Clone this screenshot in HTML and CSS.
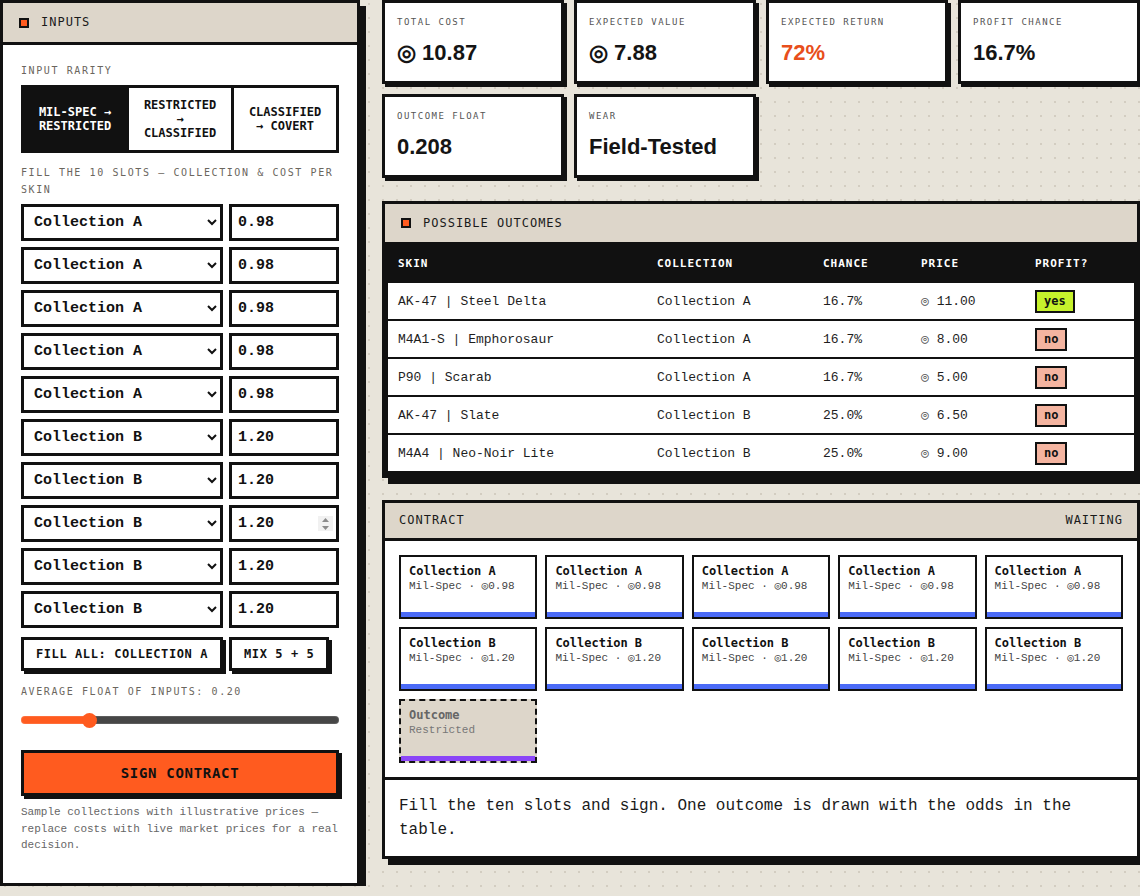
FILE: index.html
```html
<!DOCTYPE html>
<html lang="en">
<head>
<meta charset="utf-8">
<title>Trade-up Contract</title>
<link rel="stylesheet" href="styles.css">
</head>
<body>
<div class="page">
  <aside class="panel inputs">
    <div class="panel-head"><span class="sq"></span><span>INPUTS</span></div>
    <div class="inputs-body">
      <div class="label">INPUT RARITY</div>
      <div class="rarity">
        <button class="seg active">MIL-SPEC → RESTRICTED</button>
        <button class="seg">RESTRICTED → CLASSIFIED</button>
        <button class="seg">CLASSIFIED → COVERT</button>
      </div>
      <div class="label fill-label">FILL THE 10 SLOTS — COLLECTION &amp; COST PER SKIN</div>
      <div class="slots">
        <div class="slot"><select><option selected>Collection A</option><option>Collection B</option></select><div class="num"><input type="text" value="0.98"></div></div>
        <div class="slot"><select><option selected>Collection A</option><option>Collection B</option></select><div class="num"><input type="text" value="0.98"></div></div>
        <div class="slot"><select><option selected>Collection A</option><option>Collection B</option></select><div class="num"><input type="text" value="0.98"></div></div>
        <div class="slot"><select><option selected>Collection A</option><option>Collection B</option></select><div class="num"><input type="text" value="0.98"></div></div>
        <div class="slot"><select><option selected>Collection A</option><option>Collection B</option></select><div class="num"><input type="text" value="0.98"></div></div>
        <div class="slot"><select><option>Collection A</option><option selected>Collection B</option></select><div class="num"><input type="text" value="1.20"></div></div>
        <div class="slot"><select><option>Collection A</option><option selected>Collection B</option></select><div class="num"><input type="text" value="1.20"></div></div>
        <div class="slot"><select><option>Collection A</option><option selected>Collection B</option></select><div class="num"><input type="text" value="1.20"><span class="spin"><svg width="9" height="14" viewBox="0 0 9 14"><path d="M4.5 1 L8 5 H1 Z M4.5 13 L8 9 H1 Z" fill="#8a8a8a"/></svg></span></div></div>
        <div class="slot"><select><option>Collection A</option><option selected>Collection B</option></select><div class="num"><input type="text" value="1.20"></div></div>
        <div class="slot"><select><option>Collection A</option><option selected>Collection B</option></select><div class="num"><input type="text" value="1.20"></div></div>
      </div>
      <div class="actions">
        <button class="btn btn-wide">FILL ALL: COLLECTION A</button>
        <button class="btn">MIX 5 + 5</button>
      </div>
      <div class="label float-label">AVERAGE FLOAT OF INPUTS: 0.20</div>
      <input class="range" type="range" min="0" max="1" step="0.01" value="0.2">
      <button class="sign">SIGN CONTRACT</button>
      <p class="note">Sample collections with illustrative prices — replace costs with live market prices for a real decision.</p>
    </div>
  </aside>

  <main class="right">
    <div class="stats">
      <div class="stat"><div class="stat-label">TOTAL COST</div><div class="stat-value">◎ 10.87</div></div>
      <div class="stat"><div class="stat-label">EXPECTED VALUE</div><div class="stat-value">◎ 7.88</div></div>
      <div class="stat"><div class="stat-label">EXPECTED RETURN</div><div class="stat-value neg">72%</div></div>
      <div class="stat"><div class="stat-label">PROFIT CHANCE</div><div class="stat-value">16.7%</div></div>
      <div class="stat"><div class="stat-label">OUTCOME FLOAT</div><div class="stat-value">0.208</div></div>
      <div class="stat"><div class="stat-label">WEAR</div><div class="stat-value">Field-Tested</div></div>
    </div>

    <section class="panel outcomes">
      <div class="panel-head outcomes-head"><span class="sq"></span><span>POSSIBLE OUTCOMES</span></div>
      <div class="table-wrap">
        <table>
          <colgroup><col class="c1"><col class="c2"><col class="c3"><col class="c4"><col></colgroup>
          <thead><tr><th>SKIN</th><th>COLLECTION</th><th>CHANCE</th><th>PRICE</th><th>PROFIT?</th></tr></thead>
          <tbody>
            <tr><td>AK-47 | Steel Delta</td><td>Collection A</td><td>16.7%</td><td><span class="coin">◎</span> 11.00</td><td><span class="badge yes">yes</span></td></tr>
            <tr><td>M4A1-S | Emphorosaur</td><td>Collection A</td><td>16.7%</td><td><span class="coin">◎</span> 8.00</td><td><span class="badge no">no</span></td></tr>
            <tr><td>P90 | Scarab</td><td>Collection A</td><td>16.7%</td><td><span class="coin">◎</span> 5.00</td><td><span class="badge no">no</span></td></tr>
            <tr><td>AK-47 | Slate</td><td>Collection B</td><td>25.0%</td><td><span class="coin">◎</span> 6.50</td><td><span class="badge no">no</span></td></tr>
            <tr><td>M4A4 | Neo-Noir Lite</td><td>Collection B</td><td>25.0%</td><td><span class="coin">◎</span> 9.00</td><td><span class="badge no">no</span></td></tr>
          </tbody>
        </table>
      </div>
    </section>

    <section class="panel contract">
      <div class="panel-head contract-head"><span>CONTRACT</span><span>WAITING</span></div>
      <div class="tiles">
        <div class="tile"><div class="tile-title">Collection A</div><div class="tile-meta">Mil-Spec · ◎0.98</div></div>
        <div class="tile"><div class="tile-title">Collection A</div><div class="tile-meta">Mil-Spec · ◎0.98</div></div>
        <div class="tile"><div class="tile-title">Collection A</div><div class="tile-meta">Mil-Spec · ◎0.98</div></div>
        <div class="tile"><div class="tile-title">Collection A</div><div class="tile-meta">Mil-Spec · ◎0.98</div></div>
        <div class="tile"><div class="tile-title">Collection A</div><div class="tile-meta">Mil-Spec · ◎0.98</div></div>
        <div class="tile"><div class="tile-title">Collection B</div><div class="tile-meta">Mil-Spec · ◎1.20</div></div>
        <div class="tile"><div class="tile-title">Collection B</div><div class="tile-meta">Mil-Spec · ◎1.20</div></div>
        <div class="tile"><div class="tile-title">Collection B</div><div class="tile-meta">Mil-Spec · ◎1.20</div></div>
        <div class="tile"><div class="tile-title">Collection B</div><div class="tile-meta">Mil-Spec · ◎1.20</div></div>
        <div class="tile"><div class="tile-title">Collection B</div><div class="tile-meta">Mil-Spec · ◎1.20</div></div>
        <div class="tile outcome"><div class="tile-title">Outcome</div><div class="tile-meta">Restricted</div></div>
      </div>
      <div class="contract-msg">Fill the ten slots and sign. One outcome is drawn with the odds in the table.</div>
    </section>
  </main>
</div>
</body>
</html>
```

FILE: styles.css
```css
html, body {
  margin: 0;
  padding: 0;
  overflow: hidden;
}
body {
  background-color: #e8e4da;
  background-image: radial-gradient(circle, #d3cdc1 1px, transparent 1.3px);
  background-size: 14px 14px;
  background-position: -2px -3px;
  color: #111;
  font-family: "DejaVu Sans Mono", monospace;
}
.page {
  display: grid;
  grid-template-columns: 360px 758px;
  column-gap: 22px;
  align-items: start;
}

/* panels */
.panel {
  background: #fff;
  border: 3px solid #111;
  box-shadow: 6px 6px 0 #111;
}
.panel-head {
  display: flex;
  align-items: center;
  gap: 12px;
  height: 35px;
  padding: 0 16px;
  background: #ddd6ca;
  border-bottom: 3px solid #111;
  font: 12px/15px "DejaVu Sans Mono", monospace;
  letter-spacing: 1px;
  color: #1a1a1a;
}
.inputs .panel-head { height: 39px; }
.outcomes .outcomes-head { height: 38px; border-bottom: 0; }
.sq {
  width: 10px;
  height: 10px;
  box-sizing: border-box;
  background: #ff5b1f;
  border: 2px solid #111;
  flex: none;
}

/* inputs panel */
.inputs { box-sizing: border-box; }
.inputs-body { padding: 17px 18px 30px; }
.label {
  font: 10px/17px "DejaVu Sans Mono", monospace;
  letter-spacing: 1.6px;
  color: #6b665e;
}
.label + .rarity { margin-top: 6px; }
.rarity {
  display: grid;
  grid-template-columns: repeat(3, 1fr);
  gap: 3px;
  height: 68px;
  box-sizing: border-box;
  border: 3px solid #111;
  background: #111;
}
.seg {
  margin: 0;
  border: 0;
  border-radius: 0;
  padding: 0 10px;
  background: #fff;
  color: #111;
  font: bold 12px/14px "DejaVu Sans Mono", monospace;
  text-align: center;
}
.seg.active { background: #111; color: #fff; }
.fill-label { margin-top: 11px; }
.slots {
  margin-top: 6px;
  display: flex;
  flex-direction: column;
  gap: 6px;
}
.slot {
  display: grid;
  grid-template-columns: 1fr 110px;
  gap: 6px;
}
.slot select {
  height: 37px;
  box-sizing: border-box;
  margin: 0;
  border: 3px solid #111;
  border-radius: 0;
  background: #fff;
  color: #111;
  padding: 0 4px 0 6px;
  font: bold 15px "Liberation Mono", monospace;
}
.num { position: relative; }
.num input {
  width: 100%;
  height: 37px;
  box-sizing: border-box;
  margin: 0;
  border: 3px solid #111;
  border-radius: 0;
  background: #fff;
  color: #111;
  padding: 0 6px;
  font: bold 15px "Liberation Mono", monospace;
  outline: none;
}
.spin {
  position: absolute;
  right: 6px;
  top: 11px;
  width: 15px;
  height: 15px;
  background: #f1f1f1;
  display: flex;
  align-items: center;
  justify-content: center;
}
.actions {
  margin-top: 9px;
  display: flex;
  gap: 6px;
}
.btn {
  margin: 0;
  height: 34px;
  box-sizing: border-box;
  padding: 0 12px;
  border: 3px solid #111;
  border-radius: 0;
  background: #fff;
  color: #111;
  box-shadow: 3px 3px 0 #111;
  font: bold 12px/28px "DejaVu Sans Mono", monospace;
  letter-spacing: 0.6px;
  white-space: nowrap;
}
.btn-wide { width: 202px; padding: 0; }
.float-label { margin-top: 12px; }
.range {
  -webkit-appearance: none;
  appearance: none;
  display: block;
  width: 100%;
  height: 16px;
  margin: 12px 0 0;
  padding: 0;
  background: transparent;
}
.range::-webkit-slider-runnable-track {
  height: 8px;
  border-radius: 4px;
  background: linear-gradient(to right, #ff5b1f 0 21.5%, #464646 21.5% 100%);
  box-shadow: inset 0 0 0 1px rgba(255,255,255,0.12);
}
.range::-webkit-slider-thumb {
  -webkit-appearance: none;
  appearance: none;
  width: 15px;
  height: 15px;
  margin-top: -3.5px;
  border: 0;
  border-radius: 50%;
  background: #ff5b1f;
}
.sign {
  display: block;
  width: 100%;
  height: 46px;
  margin: 22px 0 0;
  box-sizing: border-box;
  border: 3px solid #111;
  border-radius: 0;
  background: #ff5b1f;
  color: #111;
  box-shadow: 3px 3px 0 #111;
  font: bold 14px "DejaVu Sans Mono", monospace;
  letter-spacing: 0.7px;
}
.note {
  margin: 8px 0 0;
  font: 11px/16.5px "Liberation Mono", monospace;
  color: #666;
}
.inputs-body { padding-bottom: 29px; }

/* right column */
.right { display: block; }
.stats {
  display: grid;
  grid-template-columns: repeat(4, 1fr);
  gap: 10px;
}
.stat {
  background: #fff;
  border: 3px solid #111;
  box-shadow: 3px 3px 0 #111;
  padding: 13px 12px 15px;
}
.stat-label {
  font: 9px/13px "DejaVu Sans Mono", monospace;
  letter-spacing: 1.5px;
  color: #555;
}
.stat-value {
  margin-top: 10px;
  font: bold 22px/27px "Liberation Sans", Arial, sans-serif;
  color: #141414;
}
.stat-value.neg { color: #e84e1b; }

.outcomes { margin-top: 23px; }
.table-wrap {
  background: #111;
  padding: 0 3px 2px;
}
table {
  width: 100%;
  table-layout: fixed;
  border-collapse: separate;
  border-spacing: 0;
}
col.c1 { width: 259px; }
col.c2 { width: 166px; }
col.c3 { width: 98px; }
col.c4 { width: 114px; }
th {
  background: #111;
  color: #fff;
  text-align: left;
  padding: 15px 10px 13px;
  font: bold 11px/13px "DejaVu Sans Mono", monospace;
  letter-spacing: 1px;
}
td {
  height: 36px;
  padding: 0 10px;
  background: #fff;
  border-bottom: 2px solid #111;
  font: 13px "Liberation Mono", monospace;
  color: #1e1e1e;
  vertical-align: middle;
  white-space: nowrap;
}
.coin { color: #555; }
.badge {
  display: inline-block;
  padding: 0 7px;
  border: 2px solid #111;
  font: bold 12px/19px "DejaVu Sans Mono", monospace;
  color: #111;
}
.badge.yes { background: #c6f22c; }
.badge.no { background: #f4b4a0; }

.contract { margin-top: 22px; }
.contract-head {
  justify-content: space-between;
  padding: 0 14px;
}
.tiles {
  display: grid;
  grid-template-columns: repeat(5, 1fr);
  gap: 8px;
  padding: 14px;
  border-bottom: 3px solid #111;
}
.tile {
  height: 64px;
  box-sizing: border-box;
  border: 2px solid #111;
  padding: 6px 8px 0;
  background: #fff;
  box-shadow: inset 0 -5px 0 #4b6bf7;
}
.tile-title {
  font: bold 12px/16px "DejaVu Sans Mono", monospace;
  color: #111;
}
.tile-meta {
  font: 11px/14px "Liberation Mono", monospace;
  color: #444;
}
.tile.outcome {
  border-style: dashed;
  background: #ddd6ca;
  box-shadow: inset 0 -5px 0 #8a45f7;
}
.tile.outcome .tile-title { color: #666; }
.tile.outcome .tile-meta { color: #777; }
.contract-msg {
  padding: 14px 14px 14px;
  font: 16px/24px "Liberation Mono", monospace;
  color: #1a1a1a;
}
```
